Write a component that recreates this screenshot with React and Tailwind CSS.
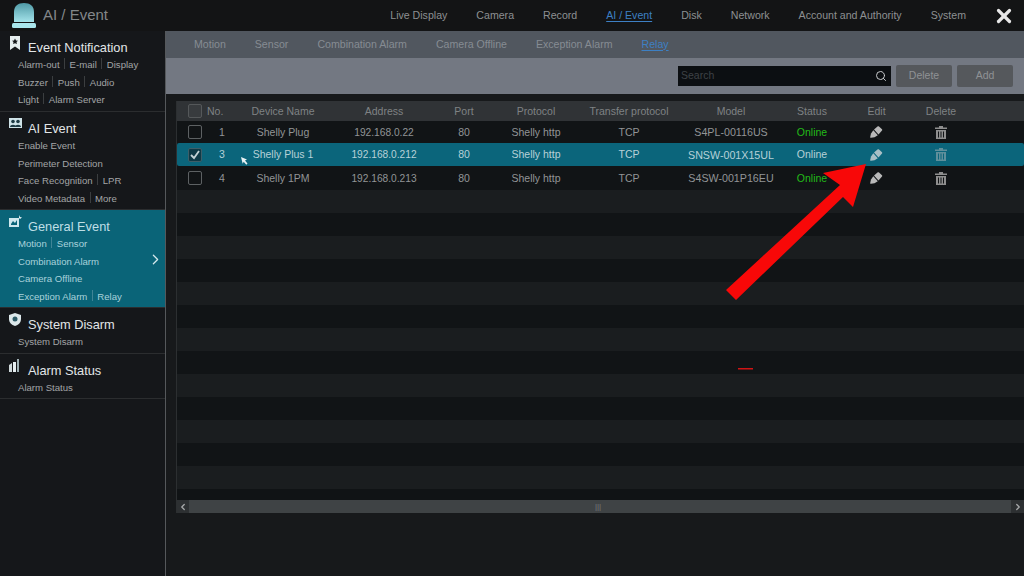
import { Search, ChevronLeft, ChevronRight, X } from "lucide-react";

const FONT = { fontFamily: '"Liberation Sans", Arial, sans-serif' };

const NAV = ["Live Display", "Camera", "Record", "AI / Event", "Disk", "Network", "Account and Authority", "System"];
const TABS = ["Motion", "Sensor", "Combination Alarm", "Camera Offline", "Exception Alarm", "Relay"];

const COLS = "grid-cols-[30px_30px_98px_98px_62px_82px_104px_100px_62px_67px_62px_1fr]";

const DEVICES = [
  { no: 1, name: "Shelly Plug", ip: "192.168.0.22", model: "S4PL-00116US", h: "h-[22px]" },
  { no: 3, name: "Shelly Plus 1", ip: "192.168.0.212", model: "SNSW-001X15UL", selected: true, h: "h-[23px]" },
  { no: 4, name: "Shelly 1PM", ip: "192.168.0.213", model: "S4SW-001P16EU", h: "h-[24px]" },
];

const BellIcon = () => (
  <svg width="26" height="30" viewBox="0 0 26 30" className="block">
    <defs>
      <linearGradient id="bell" x1="0" y1="0" x2="0" y2="1">
        <stop offset="0" stopColor="#4f9aa6" />
        <stop offset="1" stopColor="#a4e3ea" />
      </linearGradient>
    </defs>
    <path d="M3 21V11C3 5 7 2 13 2s10 3 10 9v10z" fill="url(#bell)" />
    <rect x="1" y="22" width="24" height="5" rx="1.5" fill="#a9e6ec" />
  </svg>
);

const BookmarkIcon = () => (
  <svg width="12" height="14" viewBox="0 0 12 14" className="block">
    <path d="M1 0h10v14L6 10.500 1 14z" fill="#e6eef0" />
    <path d="M6 2.500l1 2 2 .2-1.500 1.400.4 2L6 7.200l-1.900.9.4-2L3 4.700l2-.2z" fill="#15181a" />
  </svg>
);

const PeopleIcon = () => (
  <svg width="13" height="12" viewBox="0 0 13 12" className="block">
    <rect x="0" y="1" width="13" height="10" fill="#cfe3e8" />
    <circle cx="4" cy="4.500" r="1.800" fill="#1c3a44" />
    <circle cx="9" cy="4.500" r="1.800" fill="#1c3a44" />
    <path d="M1 10c0-3 6-3 6 0zM6 10c0-3 6-3 6 0z" fill="#1c3a44" />
  </svg>
);

const GeneralIcon = () => (
  <svg width="14" height="12" viewBox="0 0 14 12" className="block">
    <path d="M0 3h10v9H0z" fill="#cfe8ee" />
    <path d="M2 9l2-3 2 2 2-3v5H2z" fill="#0a6478" />
    <path d="M10 0l1 2 2 .5-2 1.500-1-1z" fill="#e6f2f4" />
  </svg>
);

const ShieldIcon = () => (
  <svg width="12" height="13" viewBox="0 0 12 13" className="block">
    <path d="M6 0l6 2v4c0 3.500-2.500 6-6 7-3.500-1-6-3.500-6-7V2z" fill="#dce8ea" />
    <circle cx="6" cy="6" r="2.500" fill="#2c5a66" />
  </svg>
);

const BarsIcon = () => (
  <svg width="11" height="13" viewBox="0 0 11 13" className="block">
    <path d="M0 6l3-2v9H0z" fill="#cfd8da" />
    <path d="M4 3h3v10H4z" fill="#e6eef0" />
    <path d="M8 0h2v13H8z" fill="#9fb0b4" />
  </svg>
);

const PencilIcon = ({ dim }) => {
  const c = dim ? "#a9bfc5" : "#b9b9b9";
  return (
    <svg width="13" height="12" viewBox="0 0 13 12" className="block">
      <path d="M4 3.500L7.500 0.500c.5-.4 1-.4 1.500 0l3 2.700c.4.400.4 1 0 1.400L8.500 8.500 4 3.500z" fill={c} />
      <path d="M3.300 4.300L7.800 9.300 4.500 11.300 1 11.800c-.5 0-.9-.4-.8-.9L1 7.500z" fill={c} />
    </svg>
  );
};

const TrashIcon = ({ dim }) => {
  const c = dim ? "#5f8f9b" : "#8e8e8e";
  return (
    <svg width="12" height="13" viewBox="0 0 12 13" className="block">
      <path d="M4 0h4v1.500h4V3H0V1.500h4z" fill={c} />
      <path d="M1 4h10v9H1zM3 5.500v6h1v-6zM5.500 5.500v6h1v-6zM8 5.500v6h1v-6z" fill={c} fillRule="evenodd" />
    </svg>
  );
};

const Sep = ({ active }) => (
  <span className={`mx-[4.500px] inline-block h-[11px] w-px align-[-1px] ${active ? "bg-[#3f8496]" : "bg-[#3b3e40]"}`} />
);

const SideSection = ({ icon, title, lines, active, height }) => (
  <div className={`relative border-b border-[#2b2d2f] pl-[18px] ${height} ${active ? "bg-[#0a6478]" : ""}`}>
    <div className="absolute left-[9px] top-[5px]">{icon}</div>
    <div
      className={`flex h-[25.500px] items-center pl-[10px] pt-[8px] text-[12.800px] ${
        active ? "text-[#bfdfe6]" : "text-[#e2e6e8]"
      }`}
    >
      {title}
    </div>
    {lines.map((line) => (
      <div
        key={line.join()}
        className={`flex h-[17.500px] items-center text-[9.600px] ${active ? "text-[#a9d2db]" : "text-[#a3a5a7]"}`}
      >
        {line.map((t, i) => (
          <span key={t}>
            {i > 0 && <Sep active={active} />}
            {t}
          </span>
        ))}
      </div>
    ))}
    {active && <ChevronRight className="absolute left-[147px] top-[41px] text-[#d6e8ec]" size={17} strokeWidth={1.800} />}
  </div>
);

const Sidebar = () => (
  <div className="w-[165px] shrink-0 bg-[#15171a]">
    <SideSection
      icon={<BookmarkIcon />}
      title="Event Notification"
      height="h-[81px]"
      lines={[["Alarm-out", "E-mail", "Display"], ["Buzzer", "Push", "Audio"], ["Light", "Alarm Server"]]}
    />
    <SideSection
      icon={<PeopleIcon />}
      title="AI Event"
      height="h-[98px]"
      lines={[["Enable Event"], ["Perimeter Detection"], ["Face Recognition", "LPR"], ["Video Metadata", "More"]]}
    />
    <SideSection
      icon={<GeneralIcon />}
      title="General Event"
      height="h-[98px]"
      active
      lines={[["Motion", "Sensor"], ["Combination Alarm"], ["Camera Offline"], ["Exception Alarm", "Relay"]]}
    />
    <SideSection icon={<ShieldIcon />} title="System Disarm" height="h-[46px]" lines={[["System Disarm"]]} />
    <SideSection icon={<BarsIcon />} title="Alarm Status" height="h-[45px]" lines={[["Alarm Status"]]} />
  </div>
);

const Checkbox = ({ checked, header }) => (
  <div className="pl-[11px]">
    <div
      className={`flex h-[14px] w-[14px] items-center justify-center rounded-[2px] border ${
        checked
          ? "border-[#3d5f69] bg-[#0f3a47]"
          : header
            ? "border-[#55585a] bg-[#383b3e]"
            : "border-[#5d6163] bg-transparent"
      }`}
    >
      {checked && (
        <svg width="12" height="12" viewBox="0 0 12 12">
          <path d="M2 6l3 3 5-7" fill="none" stroke="#c4d2d6" strokeWidth="1.800" />
        </svg>
      )}
    </div>
  </div>
);

const HEADERS = ["Device Name", "Address", "Port", "Protocol", "Transfer protocol", "Model", "Status", "Edit", "Delete"];

const Table = () => (
  <div className="ml-[10px] mt-[7px] flex h-[412px] flex-col border-l border-[#2c2f31]">
    <div className={`grid h-[20px] shrink-0 items-center bg-[#303336] text-[10.500px] text-[#7f8284] ${COLS}`}>
      <Checkbox header />
      <div className="pt-[1px]">No.</div>
      {HEADERS.map((h, i) => (
        <div key={h} className={`pt-[1px] text-center ${i === 0 ? "pr-[6px]" : ""}`}>
          {h}
        </div>
      ))}
      <div />
    </div>
    <div className="h-[368px] shrink-0 overflow-hidden bg-[#111416]">
      {DEVICES.map((d) => (
        <div
          key={d.no}
          className={`grid items-center text-[10.500px] ${d.h} ${COLS} ${
            d.selected ? "rounded-[2px] bg-[#0b657b] text-[#b7d1d8]" : "bg-[#111416] text-[#929496]"
          }`}
        >
          <Checkbox checked={d.selected} />
          <div className="pt-[1px] text-center">{d.no}</div>
          <div className="pr-[6px] pt-[1px] text-center">{d.name}</div>
          <div className="pt-[1px] text-center text-[10.200px]">{d.ip}</div>
          <div className="pt-[1px] text-center">80</div>
          <div className="pt-[1px] text-center">Shelly http</div>
          <div className="pt-[1px] text-center">TCP</div>
          <div className="pt-[1px] text-center text-[10.700px]">{d.model}</div>
          <div className={`pt-[1px] text-center ${d.selected ? "" : "text-[#22bb18]"}`}>Online</div>
          <div className="flex justify-center"><PencilIcon dim={d.selected} /></div>
          <div className="flex justify-center"><TrashIcon dim={d.selected} /></div>
          <div />
        </div>
      ))}
      {Array.from({ length: 13 }, (_, i) => (
        <div key={i} className={`h-[23px] ${i % 2 === 0 ? "bg-[#1a1d1f]" : "bg-[#111416]"}`} />
      ))}
    </div>
    <div className="h-[11px] shrink-0 bg-[#101315]" />
    <div className="flex h-[13px] shrink-0 items-center bg-[#3f4345]">
      <div className="flex h-full w-[12px] items-center justify-center bg-[#2d3032]">
        <ChevronLeft size={10} strokeWidth={3} className="text-[#a8aaac]" />
      </div>
      <div className="flex flex-1 items-center justify-center pr-[4px] text-[8px] leading-none text-[#75797b]">|||</div>
      <div className="flex h-full w-[13px] items-center justify-center bg-[#2d3032]">
        <ChevronRight size={10} strokeWidth={3} className="text-[#a8aaac]" />
      </div>
    </div>
  </div>
);

export default function App() {
  return (
    <div className="relative flex h-[576px] w-[1024px] flex-col overflow-hidden bg-[#17191b]" style={FONT}>
      <div className="flex h-[31px] shrink-0 items-center bg-[#131415]">
        <div className="ml-[11px]"><BellIcon /></div>
        <div className="ml-[6px] text-[15px] text-[#83878a]">AI / Event</div>
        <div className="ml-auto flex gap-[29px] text-[10.600px] text-[#8d9092]">
          {NAV.map((n) => (
            <span key={n} className={n === "AI / Event" ? "text-[#3d80c4] underline underline-offset-2" : ""}>
              {n}
            </span>
          ))}
        </div>
        <X className="ml-[27px] mr-[9px] text-[#e8e8e8]" size={22} strokeWidth={3.500} />
      </div>
      <div className="flex min-h-0 flex-1">
        <Sidebar />
        <div className="w-[1px] shrink-0 bg-[#55585b]" />
        <div className="flex min-w-0 flex-1 flex-col">
          <div className="flex h-[27px] shrink-0 items-center gap-[29px] bg-[#51575f] pl-[28px] text-[10.600px] text-[#868c93]">
            {TABS.map((t) => (
              <span key={t} className={t === "Relay" ? "text-[#3d80c4] underline underline-offset-2" : ""}>
                {t}
              </span>
            ))}
          </div>
          <div className="flex h-[36px] shrink-0 items-center bg-[#737882] pr-[11px]">
            <div className="ml-auto flex h-[20px] w-[213px] items-center justify-between bg-[#0c0f12] pl-[3px] pr-[4px] text-[10.500px] text-[#3e4246]">
              Search
              <Search size={12} strokeWidth={2} className="text-[#c8cacc]" />
            </div>
            <div className="ml-[5px] flex h-[22px] w-[56px] items-center justify-center rounded-[2px] bg-[#55585c] text-[10.500px] text-[#8f9295]">
              Delete
            </div>
            <div className="ml-[5px] flex h-[22px] w-[56px] items-center justify-center rounded-[2px] bg-[#55585c] text-[10.500px] text-[#8f9295]">
              Add
            </div>
          </div>
          <Table />
        </div>
      </div>
      <svg className="absolute left-0 top-0" width="1024" height="576" viewBox="0 0 1024 576">
        <path d="M866 164L823 173 840 185 726 290 736 300 843 197 853 207z" fill="#f80808" />
        <path d="M738 368h15v1.500h-15z" fill="#d01414" />
        <path d="M241 157l6 2.500-2 1 2.500 3-1.200 1.200-2.600-3-1 2z" fill="#e8f2f4" />
      </svg>
    </div>
  );
}
